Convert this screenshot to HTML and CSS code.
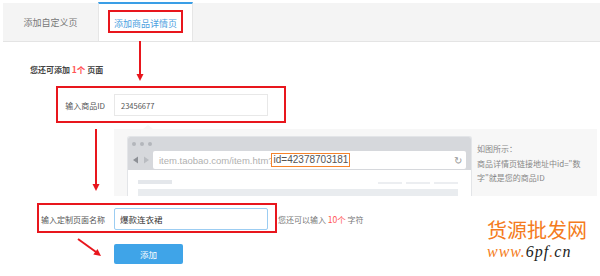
FILE: index.html
```html
<!DOCTYPE html>
<html lang="zh-CN">
<head>
    <meta charset="UTF-8">
    <title>添加商品详情页</title>
    <link rel="stylesheet" href="styles.css">
</head>
<body>
    <div class="tabs">
        <div class="tab">添加自定义页</div>
        <div class="tab active">添加商品详情页</div>
    </div>

    <div class="content">
        <p class="notice">您还可添加 <em>1个</em> 页面</p>

        <div class="field">
            <label>输入商品ID</label>
            <input type="text" value="23456677">
        </div>

        <div class="demo">
            <div class="browser">
                <div class="chrome">
                    <div class="dots"><i></i><i></i><i></i></div>
                    <div class="addr-row">
                        <span class="nav">
                            <svg width="18" height="8" viewBox="0 0 18 8">
                                <polygon points="1,4 6,0.5 6,7.5" fill="#8d9096"/>
                                <polygon points="17,4 12,0.5 12,7.5" fill="#b9bcc1"/>
                            </svg>
                        </span>
                        <div class="addr">
                            item.taobao.com/item.htm?<span class="hl">id=42378703181</span>
                            <span class="reload">&#8635;</span>
                        </div>
                    </div>
                </div>
                <div class="page-body">
                    <div class="bar-row">
                        <span class="bar short"></span>
                        <span class="bar-group"><span class="bar mini"></span><span class="bar mini"></span><span class="bar mini"></span></span>
                    </div>
                    <div class="bar wide"></div>
                </div>
            </div>
            <div class="help">如图所示：<br>商品详情页链接地址中id="数<br>字"就是您的商品ID</div>
        </div>

        <div class="field name-field">
            <label>输入定制页面名称</label>
            <input type="text" class="focus" value="爆款连衣裙">
            <span class="tip">您还可以输入 <em>10个</em> 字符</span>
        </div>

        <div class="actions">
            <button>添加</button>
        </div>
    </div>

    <!-- red annotation marks drawn over the form -->
    <svg class="marks" width="600" height="276" viewBox="0 0 600 276">
        <g fill="none" stroke="#e8161d" stroke-width="2">
            <rect x="109" y="11" width="73" height="21"/>
            <rect x="57" y="87" width="228" height="35"/>
            <rect x="38" y="204" width="238" height="28"/>
            <line x1="140" y1="41" x2="140" y2="75"/>
            <line x1="96" y1="129" x2="96" y2="185"/>
            <line x1="78" y1="239" x2="96" y2="252"/>
        </g>
        <g fill="#e8161d">
            <polygon points="136.5,74 143.5,74 140,81"/>
            <polygon points="92.5,184 99.5,184 96,191"/>
            <polygon points="93.3,254.6 97.5,249 101,256"/>
        </g>
    </svg>

    <div class="watermark">
        <div class="wm-title">货源批发网</div>
        <div class="wm-url"><span class="o">www.</span>6pf<span class="o">.</span>cn</div>
    </div>
</body>
</html>
```

FILE: styles.css
```css
body {
    margin: 0;
    width: 600px;
    height: 276px;
    overflow: hidden;
    position: relative;
    background: #fff;
    font-family: "Noto Sans CJK SC", "Microsoft YaHei", sans-serif;
    font-size: 8px;
    color: #555;
}
.tabs {
    display: flex;
    margin: 3px 0 0 3px;
    height: 38px;
    background: #f4f4f4;
    border-bottom: 1px solid #e4e4e4;
}
.tab {
    width: 95px;
    box-sizing: border-box;
    display: flex;
    align-items: center;
    justify-content: center;
    font-size: 9px;
    color: #777;
}
.tab.active {
    background: #fff;
    color: #4ba0e0;
    border-top: 2px solid #3a9ee6;
    border-left: 1px solid #e6e6e6;
    border-right: 1px solid #e6e6e6;
    height: 39px;
    margin-top: -1px;
    padding-top: 1px;
}
.notice {
    margin: 20px 0 0 30px;
    line-height: 14px;
    font-weight: bold;
    color: #444;
}
.notice em, .tip em {
    font-style: normal;
    font-size: 8.5px;
    color: #f55;
}
.field {
    display: flex;
    align-items: center;
    height: 22px;
    margin-top: 17px;
}
.field label {
    width: 105px;
    margin-right: 9px;
    text-align: right;
    color: #555;
}
.field input {
    width: 154px;
    height: 22px;
    box-sizing: border-box;
    margin: 0;
    padding: 0 6px;
    border: 1px solid #e8e8e8;
    font-family: inherit;
    font-size: 7.5px;
    color: #555;
    outline: none;
}
.field input.focus {
    border-color: #9ccdf2;
    border-radius: 2px;
    padding: 0 5px;
    font-size: 8.5px;
    color: #333;
}
.demo {
    position: relative;
    display: flex;
    width: 483px;
    height: 67px;
    box-sizing: border-box;
    margin: 13px 0 0 114px;
    padding: 7px 0 0 13px;
    background: #f7f7f7;
}
.demo::before {
    content: "";
    position: absolute;
    top: -4px;
    left: 29px;
    border-left: 5px solid transparent;
    border-right: 5px solid transparent;
    border-bottom: 4px solid #f7f7f7;
}
.browser {
    width: 345px;
    height: 60px;
    overflow: hidden;
    box-sizing: border-box;
    background: #fff;
    border: 1px solid #e3e5e8;
    border-bottom: none;
    border-radius: 3px 3px 0 0;
}
.chrome {
    background: #d6d8dc;
    height: 33px;
}
.dots {
    display: flex;
    align-items: center;
    gap: 4px;
    height: 14px;
    padding-left: 4px;
}
.dots i {
    width: 4px;
    height: 4px;
    border-radius: 50%;
    background: #b3b6bb;
}
.addr-row {
    display: flex;
    height: 19px;
}
.nav {
    width: 25px;
    display: flex;
    align-items: center;
    justify-content: center;
    height: 18px;
}
.addr {
    flex: 1;
    display: flex;
    align-items: center;
    height: 18px;
    margin-right: 5px;
    padding-left: 6px;
    background: #fff;
    border-radius: 2px;
    font-family: "Liberation Sans", Arial, sans-serif;
    font-size: 9.5px;
    color: #b0b0b0;
    white-space: nowrap;
}
.hl {
    margin-left: -3px;
    padding: 0 1px 0 2px;
    line-height: 12px;
    border: 1.5px solid #f5832b;
    background: #fff;
    color: #555;
    font-size: 10px;
}
.reload {
    margin-left: auto;
    padding-right: 4px;
    font-size: 10px;
    color: #999;
}
.page-body {
    padding: 10px 13px 0 10px;
}
.bar-row {
    display: flex;
    align-items: flex-end;
    height: 4px;
}
.bar {
    display: block;
    background: #e4e7eb;
}
.bar.short {
    width: 34px;
    height: 4px;
}
.bar-group {
    display: flex;
    gap: 4px;
    margin-left: auto;
}
.bar.mini {
    width: 24px;
    height: 2px;
    background: #eceef1;
}
.bar.wide {
    height: 10px;
    margin-top: 5px;
    background: #e9ecef;
}
.help {
    margin-left: 5px;
    padding-top: 6px;
    line-height: 14.5px;
    color: #888;
    white-space: nowrap;
}
.name-field {
    margin-top: 12px;
}
.tip {
    margin-left: 10px;
    color: #777;
}
.actions {
    margin: 14px 0 0 114px;
}
.actions button {
    width: 69px;
    height: 20px;
    border: none;
    border-radius: 2px;
    background: #3fa4e8;
    color: #fff;
    font-family: inherit;
    font-size: 8.5px;
}
.marks {
    position: absolute;
    top: 0;
    left: 0;
    pointer-events: none;
}
.watermark {
    position: absolute;
    left: 487px;
    top: 217px;
}
.wm-title {
    font-size: 20px;
    line-height: 26px;
    color: #f47b20;
}
.wm-url {
    font-family: "Liberation Serif", serif;
    font-style: italic;
    font-size: 16px;
    letter-spacing: 1px;
    line-height: 18px;
    color: #222;
}
.wm-url .o {
    color: #f47b20;
}
```
